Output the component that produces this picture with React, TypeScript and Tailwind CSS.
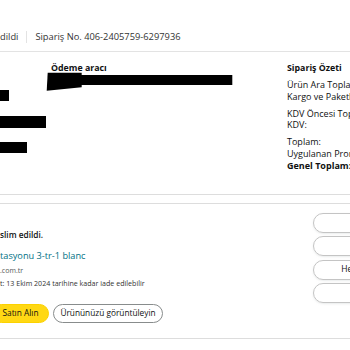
export default function App() {
  return (
    <div className="w-[350px] h-[350px] overflow-hidden bg-white font-['Open_Sans',sans-serif] text-[#0F1111]">
      <div className="h-[195px] border-b border-[#DDDDDD]">
        <div className="h-[52px] border-b border-[#E3E3E3] pt-[31px]">
          <div className="h-[12px] flex items-center text-[9.3px] leading-[12px] text-[#333333] whitespace-nowrap">
            <span>dildi</span>
            <span className="mx-[8px] w-px h-[12px] bg-[#E3E3E3]" />
            <span>Sipariş No. 406-2405759-6297936</span>
          </div>
        </div>
        <div className="flex pt-[10px]">
          <div className="w-[46px] shrink-0">
            <div className="mt-[28px] w-[9px] h-[11px] bg-black" />
            <div className="mt-[15px] w-[46px] h-[12px] bg-black" />
            <div className="mt-[14px] w-[27px] h-[11px] bg-black" />
          </div>
          <div className="w-[241px] shrink-0">
            <div className="ml-[5px] text-[8.8px] leading-[12px] font-bold whitespace-nowrap">Ödeme aracı</div>
            <svg className="block -mt-[2px]" width="188" height="20" viewBox="0 0 188 20">
              <polygon points="1.7,0.7 35.7,0.7 35.7,15.3 0.7,18.7" fill="#000" />
              <rect x="35" y="3" width="151.3" height="10" fill="#000" />
            </svg>
          </div>
          <div className="whitespace-nowrap">
            <div className="text-[8.8px] leading-[12px] font-bold">Sipariş Özeti</div>
            <div className="mt-[5.25px] text-[9px] leading-[11.5px]">
              <div>Ürün Ara Toplamı:</div>
              <div>Kargo ve Paketleme:</div>
            </div>
            <div className="mt-[5.5px] text-[9px] leading-[11.5px]">
              <div>KDV Öncesi Toplam:</div>
              <div>KDV:</div>
            </div>
            <div className="mt-[5.5px] text-[9px] leading-[11.5px]">
              <div>Toplam:</div>
              <div>Uygulanan Promosyon:</div>
            </div>
            <div className="mt-[0.5px] text-[9px] leading-[11.5px] font-bold">Genel Toplam:</div>
          </div>
        </div>
      </div>
      <div className="mt-[8px] h-[136px] border-y border-[#DDDDDD] flex">
        <div className="w-[313px] shrink-0 pt-[25px] whitespace-nowrap">
          <div className="text-[8.3px] leading-[12px] font-semibold">slim edildi.</div>
          <div className="mt-[9px] text-[9.2px] leading-[12px] text-[#007185]">tasyonu 3-tr-1 blanc</div>
          <div className="mt-[4px] text-[7px] leading-[10px] text-[#565959]">.com.tr</div>
          <div className="mt-[2px] text-[7.1px] leading-[10px] text-[#333333]">t: 13 Ekim 2024 tarihine kadar iade edilebilir</div>
          <div className="mt-[16px] flex items-center">
            <div className="-ml-[8px] w-[57px] h-[19px] rounded-full bg-[#FFD814] border border-[#FCD200] flex items-center justify-center text-[8.3px]">Satın Alın</div>
            <div className="ml-[4px] w-[110px] h-[19px] rounded-full border border-[#888C8C] bg-white flex items-center justify-center text-[8.3px]">Ürününüzü görüntüleyin</div>
          </div>
        </div>
        <div className="pt-[9px] flex flex-col gap-[3.3px] shrink-0">
          <div className="w-[168px] h-[20px] rounded-full border border-[#C4C4C4] shadow-[0_1px_2px_rgba(213,217,217,0.5)] flex items-center justify-center text-[8.5px] whitespace-nowrap">Paketi takip et</div>
          <div className="w-[168px] h-[20px] rounded-full border border-[#C4C4C4] shadow-[0_1px_2px_rgba(213,217,217,0.5)] flex items-center justify-center text-[8.5px] whitespace-nowrap">Ürünleri iade et</div>
          <div className="w-[168px] h-[20px] rounded-full border border-[#C4C4C4] shadow-[0_1px_2px_rgba(213,217,217,0.5)] flex items-center justify-center text-[8.5px] whitespace-nowrap">Hediye makbuzunu paylaşın</div>
          <div className="w-[168px] h-[20px] rounded-full border border-[#C4C4C4] shadow-[0_1px_2px_rgba(213,217,217,0.5)] flex items-center justify-center text-[8.5px] whitespace-nowrap">Ürün yorumu yazın</div>
        </div>
      </div>
    </div>
  );
}
